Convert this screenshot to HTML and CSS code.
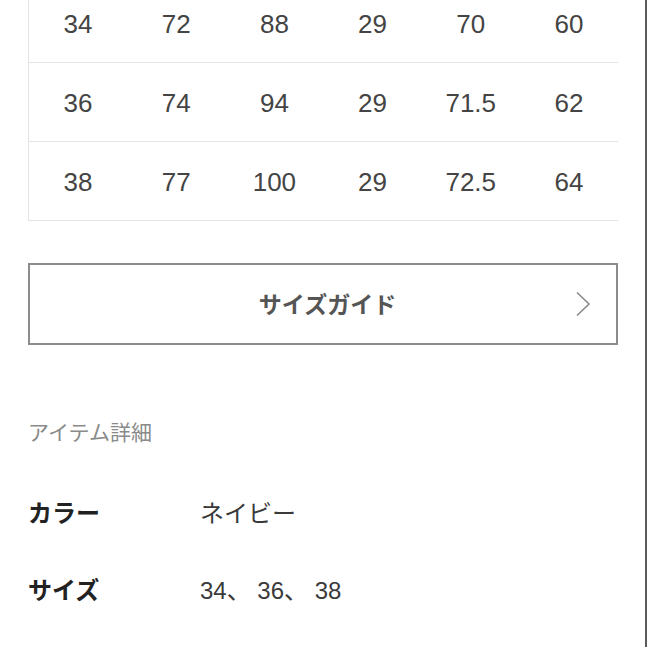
FILE: index.html
```html
<!DOCTYPE html>
<html lang="ja">
<head>
<meta charset="utf-8">
<title>サイズ</title>
<link rel="stylesheet" href="styles.css">
</head>
<body>
<div class="page">
  <div class="content">
    <div class="size-table">
      <div class="row"><span>34</span><span>72</span><span>88</span><span>29</span><span>70</span><span>60</span></div>
      <div class="row"><span>36</span><span>74</span><span>94</span><span>29</span><span>71.5</span><span>62</span></div>
      <div class="row"><span>38</span><span>77</span><span>100</span><span>29</span><span>72.5</span><span>64</span></div>
    </div>
    <a class="guide-btn" href="#">
      <span class="guide-label">サイズガイド</span>
      <svg class="chevron" width="16" height="26" viewBox="0 0 16 26" aria-hidden="true"><path d="M2 1.5 L14 13 L2 24.5" fill="none" stroke="#8a8a8a" stroke-width="1.6"/></svg>
    </a>
    <section class="details">
      <h2 class="details-title">アイテム詳細</h2>
      <dl class="spec">
        <div class="spec-row"><dt>カラー</dt><dd>ネイビー</dd></div>
        <div class="spec-row"><dt>サイズ</dt><dd>34、 36、 38</dd></div>
      </dl>
    </section>
  </div>
</div>
</body>
</html>
```
FILE: styles.css
```css
html, body {
  margin: 0;
  padding: 0;
  background: #fff;
  overflow: hidden;
}
body {
  font-family: "Liberation Sans", "Noto Sans CJK JP", sans-serif;
  color: #3a3a3a;
}
.page {
  display: flow-root;
  width: 647px;
  height: 647px;
  box-sizing: border-box;
  border-right: 2px solid #5a5a5a;
}
.content {
  width: 590px;
  margin-left: 28px;
}
.size-table {
  margin-top: -16px;
  border-left: 1px solid #e4e4e4;
}
.row {
  display: grid;
  grid-template-columns: repeat(6, 1fr);
  height: 79px;
  box-sizing: border-box;
  padding-top: 2px;
  border-bottom: 1px solid #e4e4e4;
  align-items: center;
  font-size: 26px;
  color: #444;
}
.row span {
  text-align: center;
}
.guide-btn {
  margin-top: 42px;
  height: 82px;
  box-sizing: border-box;
  border: 2px solid #8c8c8c;
  display: flex;
  align-items: center;
  justify-content: center;
  position: relative;
  text-decoration: none;
}
.guide-label {
  font-family: "Noto Sans CJK JP", sans-serif;
  font-weight: 700;
  font-size: 23px;
  color: #555;
  margin-left: 9px;
  margin-top: -3px;
}
.chevron {
  position: absolute;
  right: 25px;
  top: 26px;
}
.details {
  margin-top: 71px;
}
.details-title {
  margin: 0;
  font-family: "Noto Sans CJK JP", sans-serif;
  font-weight: 400;
  font-size: 21px;
  line-height: 30px;
  color: #8a8a8a;
}
.spec {
  margin: 27px 0 0;
}
.spec-row {
  display: flex;
  align-items: center;
  height: 77px;
}
.spec-row dt {
  width: 172px;
  font-family: "Noto Sans CJK JP", sans-serif;
  font-weight: 700;
  font-size: 24px;
  color: #222;
}
.spec-row dd {
  margin: 0;
  font-size: 24px;
  color: #3a3a3a;
}
```
